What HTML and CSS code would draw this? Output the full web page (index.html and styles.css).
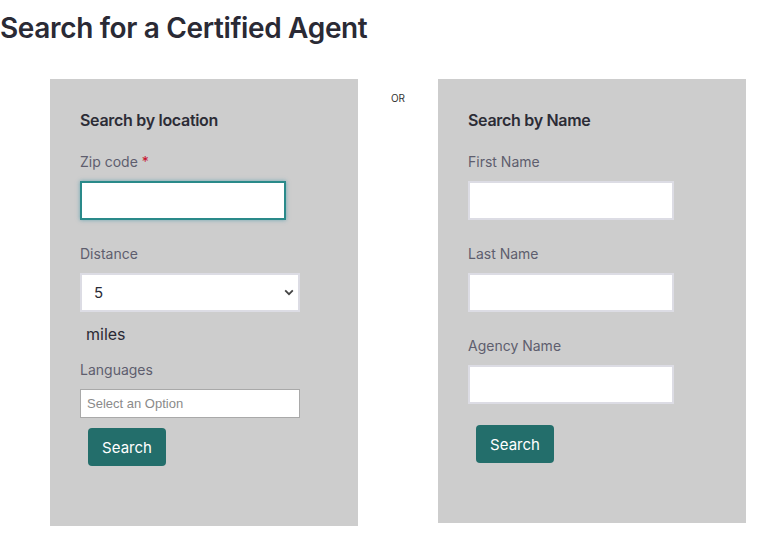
FILE: index.html
```html
<!DOCTYPE html>
<html>
<head>
    <title>Search for a Certified Agent</title>
    <meta name="viewport" content="width=device-width, initial-scale=1">
    <link rel="stylesheet" href="styles.css">
</head>
<body>
    <h1 class="page-title">Search for a Certified Agent</h1>

    <div class="search-row">
        <!-- Busqueda por ubicacion -->
        <form class="panel">
            <h2 class="panel-title">Search by location</h2>

            <div class="field">
                <label class="field-label">Zip code <span class="req">*</span></label>
                <input type="text" class="text-input is-focused">
            </div>

            <div class="field field-tight">
                <label class="field-label">Distance</label>
                <div class="select-wrap">
                    <select class="select-input">
                        <option>5</option>
                        <option>10</option>
                        <option>25</option>
                        <option>50</option>
                    </select>
                    <svg class="chevron" width="10" height="7" viewBox="0 0 10 7">
                        <path d="M1.2 1.4 L5 5.2 L8.8 1.4" fill="none" stroke="#444" stroke-width="1.8"/>
                    </svg>
                </div>
            </div>
            <div class="miles">miles</div>

            <div class="field field-small">
                <label class="field-label">Languages</label>
                <input type="text" class="option-input" placeholder="Select an Option">
            </div>

            <button type="button" class="search-btn">Search</button>
        </form>

        <div class="or">OR</div>

        <!-- Busqueda por nombre -->
        <form class="panel">
            <h2 class="panel-title">Search by Name</h2>

            <div class="field">
                <label class="field-label">First Name</label>
                <input type="text" class="text-input">
            </div>

            <div class="field">
                <label class="field-label">Last Name</label>
                <input type="text" class="text-input">
            </div>

            <div class="field field-last">
                <label class="field-label">Agency Name</label>
                <input type="text" class="text-input">
            </div>

            <button type="button" class="search-btn">Search</button>
        </form>
    </div>
</body>
</html>
```

FILE: styles.css
```css
/* Estilos generales */
body, html {
    margin: 0;
    background-color: #ffffff;
    font-family: 'Inter', 'Noto Sans', sans-serif;
    color: #2a2a35;
}

.page-title {
    margin: 0 0 34px 0;
    padding-top: 11px;
    font-size: 28px;
    line-height: 34px;
    font-weight: 600;
    letter-spacing: -0.35px;
    color: #2a2a35;
}

.search-row {
    display: flex;
    align-items: flex-start;
    padding-left: 50px;
}

/* Paneles grises */
.panel {
    width: 308px;
    box-sizing: border-box;
    background-color: #cdcdcd;
    padding: 31px 30px 60px 30px;
}

.panel-title {
    margin: 0 0 22px 0;
    font-size: 16px;
    line-height: 20px;
    font-weight: 600;
    letter-spacing: -0.3px;
    color: #2c2c36;
}

.or {
    width: 80px;
    padding-top: 13px;
    text-align: center;
    font-size: 10px;
    line-height: 12px;
    color: #333;
}

.field {
    display: flex;
    flex-direction: column;
    align-items: flex-start;
    margin-bottom: 24px;
}

.field-tight {
    margin-bottom: 12px;
}

.field-small {
    margin-bottom: 10px;
}

.field-last {
    margin-bottom: 21px;
}

.field-label {
    font-size: 14px;
    line-height: 20px;
    color: #5e5e6e;
    margin-bottom: 9px;
}

.req {
    color: #c8102e;
}

.text-input {
    width: 206px;
    height: 39px;
    box-sizing: border-box;
    border: 2px solid #dcdce4;
    background: #fff;
    padding: 0 10px;
    font-size: 15px;
    outline: none;
}

.text-input.is-focused {
    border-color: #2a8a8a;
    box-shadow: 0 0 4px rgba(42, 138, 160, 0.6);
}

.select-wrap {
    position: relative;
    width: 220px;
}

.select-input {
    appearance: none;
    -webkit-appearance: none;
    width: 220px;
    height: 39px;
    box-sizing: border-box;
    border: 2px solid #dcdce4;
    border-radius: 0;
    background: #fff;
    padding: 0 12px;
    font-family: 'Inter', sans-serif;
    font-size: 15px;
    color: #2a2a35;
}

.chevron {
    position: absolute;
    right: 6px;
    top: 16px;
    pointer-events: none;
}

.miles {
    padding-left: 6px;
    font-size: 16px;
    line-height: 20px;
    color: #2a2a35;
    margin-bottom: 16px;
}

.option-input {
    width: 220px;
    height: 29px;
    box-sizing: border-box;
    border: 1px solid #a9a9a9;
    background: #fff;
    padding: 0 6px;
    font-family: 'Liberation Sans', Arial, sans-serif;
    font-size: 13px;
}

.option-input::placeholder {
    color: #8a8a8a;
}

.search-btn {
    display: block;
    margin-left: 8px;
    width: 78px;
    height: 38px;
    border: none;
    border-radius: 4px;
    background-color: #236e6b;
    color: #fff;
    font-family: 'Inter', sans-serif;
    font-size: 15px;
    cursor: pointer;
}
```
